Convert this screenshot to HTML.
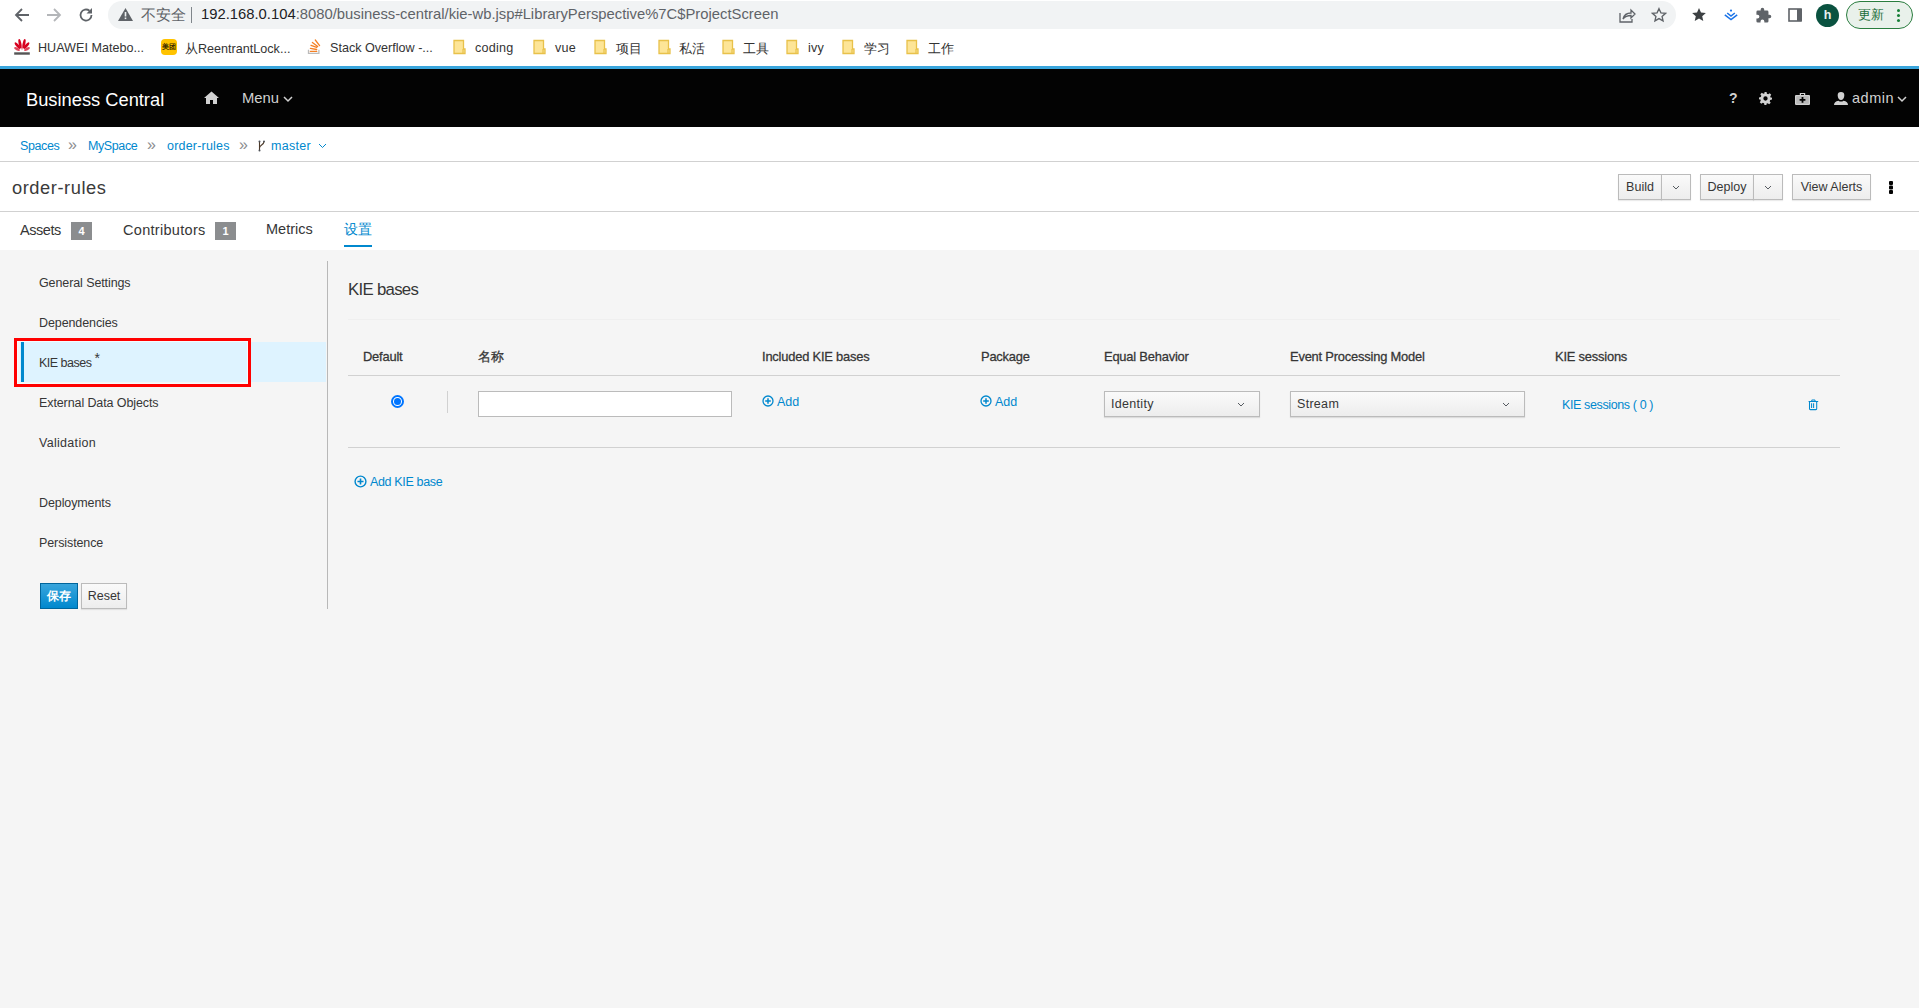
<!DOCTYPE html>
<html><head><meta charset="utf-8">
<style>
*{box-sizing:border-box}
html,body{margin:0;padding:0;width:1919px;height:1008px;overflow:hidden;background:#f5f5f5;font-family:"Liberation Sans",sans-serif;color:#363636}
.a{position:absolute;white-space:nowrap}
#chrome{position:absolute;left:0;top:0;width:1919px;height:66px;background:#fff}
#pill{position:absolute;left:108px;top:1px;width:1568px;height:28px;border-radius:14px;background:#f1f3f4}
#url{left:201px;top:6px;font-size:14.8px;color:#202124}
#url .g{color:#5f6368}
.bm{top:41px;font-size:12.6px;letter-spacing:.25px;color:#333}
.fold{position:absolute;top:40px;width:12px;height:14px;background:#fde293;border:1px solid #f2c94c;border-radius:1px}
#blue{position:absolute;left:0;top:66px;width:1919px;height:3px;background:#39a5dc}
#nav{position:absolute;left:0;top:69px;width:1919px;height:58px;background:#030303}
#bc{position:absolute;left:0;top:127px;width:1919px;height:35px;background:#fff;border-bottom:1px solid #d1d1d1}
#title{position:absolute;left:0;top:162px;width:1919px;height:50px;background:#fff;border-bottom:1px solid #d1d1d1}
#tabs{position:absolute;left:0;top:212px;width:1919px;height:38px;background:#fff}
.lnk{color:#0088ce}
.btn{position:absolute;top:12px;height:26px;background:linear-gradient(#fafafa,#ededed);border:1px solid #bbb;box-shadow:0 1px 1px rgba(3,3,3,.08);font-size:12.5px;color:#363636;text-align:center;line-height:24px}
.badge{position:absolute;top:222px;height:18px;background:#8b8d8f;color:#fff;font-size:11px;font-weight:bold;text-align:center;line-height:18px}
.nav-i{left:39px;font-size:12.5px;letter-spacing:-.1px;color:#363636}
.th{top:349px;font-size:12.9px;font-weight:normal;-webkit-text-stroke:.28px #363636;letter-spacing:-.2px;color:#363636}
.sel{position:absolute;top:391px;height:26px;background:linear-gradient(#fafafa,#ededed);border:1px solid #bbb;box-shadow:0 1px 1px rgba(3,3,3,.1);font-size:12.5px;letter-spacing:.3px;color:#363636;padding-left:6px;line-height:24px}
</style></head><body>
<div id="chrome">
  <!-- nav arrows -->
  <svg class="a" style="left:14px;top:7px" width="16" height="16" viewBox="0 0 16 16"><path d="M15 8H2M8 2L2 8l6 6" fill="none" stroke="#5f6368" stroke-width="1.8"/></svg>
  <svg class="a" style="left:46px;top:7px" width="16" height="16" viewBox="0 0 16 16"><path d="M1 8h13M8 2l6 6-6 6" fill="none" stroke="#b4b6b9" stroke-width="1.8"/></svg>
  <svg class="a" style="left:78px;top:7px" width="16" height="16" viewBox="0 0 16 16"><path d="M13.5 8A5.5 5.5 0 1 1 11.5 3.8" fill="none" stroke="#5f6368" stroke-width="1.8"/><path d="M14 1v5.5H8.5z" fill="#5f6368"/></svg>
  <div id="pill"></div>
  <svg class="a" style="left:118px;top:8px" width="15" height="13" viewBox="0 0 15 13"><path d="M7.5 0L15 13H0z" fill="#5f6368"/><rect x="6.7" y="4" width="1.6" height="4.5" fill="#f1f3f4"/><rect x="6.7" y="9.5" width="1.6" height="1.6" fill="#f1f3f4"/></svg>
  <div class="a" style="left:141px;top:6px;font-size:14.5px;color:#5f6368">不安全</div>
  <div class="a" style="left:191px;top:7px;width:1px;height:16px;background:#80868b"></div>
  <div id="url" class="a">192.168.0.104<span class="g">:8080/business-central/kie-wb.jsp#LibraryPerspective%7C$ProjectScreen</span></div>
  <!-- right toolbar -->
  <svg class="a" style="left:1619px;top:8px" width="17" height="15" viewBox="0 0 17 15"><path d="M1 5v9h12v-3" fill="none" stroke="#5f6368" stroke-width="1.3"/><path d="M4 11c1-4 4-6 8-6V2l4 4-4 4V7.5c-3 0-6 1-8 3.5z" fill="none" stroke="#5f6368" stroke-width="1.3"/></svg>
  <svg class="a" style="left:1651px;top:7px" width="16" height="16" viewBox="0 0 24 24"><path d="M12 2.5l2.9 6.3 6.9.7-5.2 4.6 1.5 6.8L12 17.4l-6.1 3.5 1.5-6.8-5.2-4.6 6.9-.7z" fill="none" stroke="#5f6368" stroke-width="2"/></svg>
  <svg class="a" style="left:1691px;top:7px" width="16" height="16" viewBox="0 0 24 24"><path d="M12 1.5l3 6.8 7.3.7-5.5 4.9 1.6 7.2L12 17.4l-6.4 3.7 1.6-7.2L1.7 9l7.3-.7z" fill="#3c4043"/></svg>
  <svg class="a" style="left:1724px;top:9px" width="15" height="13" viewBox="0 0 15 13"><circle cx="7" cy="1.6" r="1.1" fill="#1a73e8"/><path d="M3.2 4l3.8 3.1L10.8 4M0.8 5.8L7 10.6l6.2-4.8" fill="none" stroke="#1a73e8" stroke-width="1.5"/></svg>
  <svg class="a" style="left:1755px;top:7px" width="17" height="17" viewBox="0 0 24 24"><path d="M20.5 11H19V7a2 2 0 0 0-2-2h-4V3.5a2.5 2.5 0 0 0-5 0V5H4a2 2 0 0 0-2 2v3.8h1.5a2.7 2.7 0 0 1 0 5.4H2V20a2 2 0 0 0 2 2h3.8v-1.5a2.7 2.7 0 0 1 5.4 0V22H17a2 2 0 0 0 2-2v-4h1.5a2.5 2.5 0 0 0 0-5z" fill="#5f6368"/></svg>
  <svg class="a" style="left:1788px;top:8px" width="15" height="14" viewBox="0 0 15 14"><rect x="1" y="1" width="12" height="12" fill="none" stroke="#5f6368" stroke-width="1.6"/><rect x="9" y="1" width="5" height="12" fill="#5f6368"/></svg>
  <div class="a" style="left:1816px;top:4px;width:23px;height:23px;border-radius:50%;background:#0a5240;color:#e8f0ee;font-size:12.5px;font-weight:bold;text-align:center;line-height:22px">h</div>
  <div class="a" style="left:1846px;top:1px;width:67px;height:28px;border-radius:14px;border:1px solid #2a7d3f;background:#e9f1eb"></div>
  <div class="a" style="left:1858px;top:7px;font-size:12.5px;color:#1b6e3a">更新</div>
  <div class="a" style="left:1897px;top:9px;width:3px;height:3px;border-radius:50%;background:#188038;box-shadow:0 5px 0 #188038,0 10px 0 #188038"></div>

  <!-- bookmarks -->
  <svg class="a" style="left:13px;top:38px" width="18" height="18" viewBox="0 0 18 18"><g fill="#d7001e"><ellipse cx="7" cy="5.6" rx="1.35" ry="4.6" transform="rotate(-12 7 5.6)"/><ellipse cx="11" cy="5.6" rx="1.35" ry="4.6" transform="rotate(12 11 5.6)"/><ellipse cx="4.6" cy="7.6" rx="1.4" ry="4.2" transform="rotate(-40 4.6 7.6)"/><ellipse cx="13.4" cy="7.6" rx="1.4" ry="4.2" transform="rotate(40 13.4 7.6)"/></g><g fill="#e0475c"><ellipse cx="4" cy="11" rx="1.4" ry="3.2" transform="rotate(-62 4 11)"/><ellipse cx="14" cy="11" rx="1.4" ry="3.2" transform="rotate(62 14 11)"/><path d="M8 9l1 3.5 1-3.5z"/></g><rect x="1.2" y="14.3" width="15.6" height="2.4" fill="#555"/></svg>
  <div class="a bm" style="left:38px;letter-spacing:0">HUAWEI Matebo...</div>
  <div class="a" style="left:161px;top:39px;width:16px;height:16px;border-radius:4px;background:#ffc300;font-size:6.5px;color:#3a2a00;text-align:center;line-height:16px;font-weight:bold;letter-spacing:-.3px">美团</div>
  <div class="a bm" style="left:185px;letter-spacing:0">从ReentrantLock...</div>
  <svg class="a" style="left:307px;top:38px" width="14" height="17" viewBox="0 0 14 17"><path d="M1.5 11.8v3.6h10.4v-3.6" fill="none" stroke="#bcbbbb" stroke-width="1.3"/><g stroke="#f48024" stroke-width="1.3" stroke-linecap="round"><path d="M3.4 13.4h6.3M3.4 10.3l6.3 1.2M4 7.3l5.7 2.1M5.4 4.4l5.3 4.2M8.3 2l4.3 5.6"/></g></svg>
  <div class="a bm" style="left:330px;letter-spacing:0">Stack Overflow -...</div>
  <svg class="a" style="left:453px;top:39px" width="13" height="16" viewBox="0 0 13 16"><path d="M1 1.5h9.5v8.5h1.5v4.5H1z" fill="#fde597" stroke="#e8c14a" stroke-width="1.3"/><path d="M10 10v4.5" stroke="#e8c14a" stroke-width="1.2"/></svg><div class="a bm" style="left:475px">coding</div>
  <svg class="a" style="left:533px;top:39px" width="13" height="16" viewBox="0 0 13 16"><path d="M1 1.5h9.5v8.5h1.5v4.5H1z" fill="#fde597" stroke="#e8c14a" stroke-width="1.3"/><path d="M10 10v4.5" stroke="#e8c14a" stroke-width="1.2"/></svg><div class="a bm" style="left:555px">vue</div>
  <svg class="a" style="left:594px;top:39px" width="13" height="16" viewBox="0 0 13 16"><path d="M1 1.5h9.5v8.5h1.5v4.5H1z" fill="#fde597" stroke="#e8c14a" stroke-width="1.3"/><path d="M10 10v4.5" stroke="#e8c14a" stroke-width="1.2"/></svg><div class="a bm" style="left:616px">项目</div>
  <svg class="a" style="left:658px;top:39px" width="13" height="16" viewBox="0 0 13 16"><path d="M1 1.5h9.5v8.5h1.5v4.5H1z" fill="#fde597" stroke="#e8c14a" stroke-width="1.3"/><path d="M10 10v4.5" stroke="#e8c14a" stroke-width="1.2"/></svg><div class="a bm" style="left:679px">私活</div>
  <svg class="a" style="left:722px;top:39px" width="13" height="16" viewBox="0 0 13 16"><path d="M1 1.5h9.5v8.5h1.5v4.5H1z" fill="#fde597" stroke="#e8c14a" stroke-width="1.3"/><path d="M10 10v4.5" stroke="#e8c14a" stroke-width="1.2"/></svg><div class="a bm" style="left:743px">工具</div>
  <svg class="a" style="left:786px;top:39px" width="13" height="16" viewBox="0 0 13 16"><path d="M1 1.5h9.5v8.5h1.5v4.5H1z" fill="#fde597" stroke="#e8c14a" stroke-width="1.3"/><path d="M10 10v4.5" stroke="#e8c14a" stroke-width="1.2"/></svg><div class="a bm" style="left:808px">ivy</div>
  <svg class="a" style="left:842px;top:39px" width="13" height="16" viewBox="0 0 13 16"><path d="M1 1.5h9.5v8.5h1.5v4.5H1z" fill="#fde597" stroke="#e8c14a" stroke-width="1.3"/><path d="M10 10v4.5" stroke="#e8c14a" stroke-width="1.2"/></svg><div class="a bm" style="left:864px">学习</div>
  <svg class="a" style="left:906px;top:39px" width="13" height="16" viewBox="0 0 13 16"><path d="M1 1.5h9.5v8.5h1.5v4.5H1z" fill="#fde597" stroke="#e8c14a" stroke-width="1.3"/><path d="M10 10v4.5" stroke="#e8c14a" stroke-width="1.2"/></svg><div class="a bm" style="left:928px">工作</div>
</div>
<div id="blue"></div>
<div id="nav">
  <div class="a" style="left:26px;top:20px;font-size:18.3px;color:#fff">Business Central</div>
  <svg class="a" style="left:204px;top:22px" width="15" height="13" viewBox="0 0 15 13"><path d="M7.5 0.5L0 7h2v6h4V9h3v4h4V7h2z" fill="#d1d1d1"/></svg>
  <div class="a" style="left:242px;top:21px;font-size:14.8px;color:#d1d1d1">Menu</div>
  <svg class="a" style="left:283px;top:27px" width="10" height="7" viewBox="0 0 10 7"><path d="M1 1l4 4 4-4" fill="none" stroke="#d1d1d1" stroke-width="1.5"/></svg>
  <div class="a" style="left:1729px;top:21px;font-size:14px;font-weight:bold;color:#d1d1d1">?</div>
  <svg class="a" style="left:1759px;top:23px" width="13" height="13" viewBox="0 0 24 24"><path fill="#d1d1d1" d="M10 0h4l.6 3.3 2.4 1 2.8-1.9 2.8 2.8-1.9 2.8 1 2.4L24 10v4l-3.3.6-1 2.4 1.9 2.8-2.8 2.8-2.8-1.9-2.4 1L14 24h-4l-.6-3.3-2.4-1-2.8 1.9-2.8-2.8 1.9-2.8-1-2.4L0 14v-4l3.3-.6 1-2.4-1.9-2.8 2.8-2.8 2.8 1.9 2.4-1zM12 8a4 4 0 1 0 0 8 4 4 0 0 0 0-8z"/></svg>
  <svg class="a" style="left:1795px;top:92px;top:23px" width="15" height="13" viewBox="0 0 15 13"><path d="M4.8 3V1h5.4v2h3.8a1 1 0 0 1 1 1v8a1 1 0 0 1-1 1H1a1 1 0 0 1-1-1V4a1 1 0 0 1 1-1zM6 3h3V2H6z" fill="#d1d1d1"/><rect x="1.2" y="4.2" width="12.6" height="7.6" fill="#b9b9b9"/><path d="M6.6 5h1.8v2h2v1.8h-2v2H6.6v-2h-2V7h2z" fill="#030303"/></svg>
  <svg class="a" style="left:1834px;top:23px" width="14" height="13" viewBox="0 0 14 13"><path d="M7 0a3.3 3.3 0 0 1 3.3 3.5C10.3 6 8.8 8 7 8S3.7 6 3.7 3.5A3.3 3.3 0 0 1 7 0zM0 13c0-2.5 1.5-3.7 4.5-4.3C5.3 9.3 6 9.6 7 9.6s1.7-.3 2.5-.9c3 .6 4.5 1.8 4.5 4.3z" fill="#d1d1d1"/></svg>
  <div class="a" style="left:1852px;top:21px;font-size:14.5px;letter-spacing:.5px;color:#d1d1d1">admin</div>
  <svg class="a" style="left:1897px;top:27px" width="10" height="7" viewBox="0 0 10 7"><path d="M1 1l4 4 4-4" fill="none" stroke="#d1d1d1" stroke-width="1.5"/></svg>
</div>
<div id="bc">
  <div class="a lnk" style="left:20px;top:12px;font-size:12.5px;letter-spacing:-.4px">Spaces</div>
  <div class="a" style="left:68px;top:9px;font-size:16px;color:#8b8d8f">»</div>
  <div class="a lnk" style="left:88px;top:12px;font-size:12.5px;letter-spacing:-.4px">MySpace</div>
  <div class="a" style="left:147px;top:9px;font-size:16px;color:#8b8d8f">»</div>
  <div class="a lnk" style="left:167px;top:12px;font-size:12.5px;letter-spacing:.2px">order-rules</div>
  <div class="a" style="left:239px;top:9px;font-size:16px;color:#8b8d8f">»</div>
  <svg class="a" style="left:257px;top:140px;top:13px" width="9" height="12" viewBox="0 0 9 12"><path d="M2.5 1.5v9M2.5 8C2.5 5 7 5 7 1.5" fill="none" stroke="#4d3a2a" stroke-width="1.1"/><circle cx="2.5" cy="1.5" r="1" fill="#4d5258"/><circle cx="2.5" cy="10.5" r="1" fill="#4d5258"/><circle cx="7" cy="1.5" r="1" fill="#4d5258"/></svg>
  <div class="a lnk" style="left:271px;top:12px;font-size:12.5px;letter-spacing:.3px">master</div>
  <svg class="a" style="left:318px;top:16px" width="9" height="6" viewBox="0 0 9 6"><path d="M1 1l3.5 3.5L8 1" fill="none" stroke="#0088ce" stroke-width="1"/></svg>
</div>
<div id="title">
  <div class="a" style="left:12px;top:15px;font-size:18.3px;letter-spacing:.55px;color:#3a3a3a">order-rules</div>
  <div class="btn" style="left:1618px;width:44px">Build</div>
  <div class="btn" style="left:1661px;width:30px"><svg width="8" height="5" viewBox="0 0 8 5" style="vertical-align:middle"><path d="M1 1l3 3 3-3" fill="none" stroke="#4d5258" stroke-width="0.95"/></svg></div>
  <div class="btn" style="left:1700px;width:54px">Deploy</div>
  <div class="btn" style="left:1753px;width:30px"><svg width="8" height="5" viewBox="0 0 8 5" style="vertical-align:middle"><path d="M1 1l3 3 3-3" fill="none" stroke="#4d5258" stroke-width="0.95"/></svg></div>
  <div class="btn" style="left:1792px;width:79px">View Alerts</div>
  <div class="a" style="left:1889px;top:19px;width:3.5px;height:3.5px;border-radius:1px;background:#030303;box-shadow:0 4.5px 0 #030303,0 9px 0 #030303"></div>
</div>
<div id="tabs">
  <div class="a" style="left:20px;top:10px;font-size:14.5px;letter-spacing:-.45px;color:#363636">Assets</div>
  <div class="badge" style="left:71px;top:10px;width:21px">4</div>
  <div class="a" style="left:123px;top:10px;font-size:14.5px;letter-spacing:.3px;color:#363636">Contributors</div>
  <div class="badge" style="left:215px;top:10px;width:21px">1</div>
  <div class="a" style="left:266px;top:9px;font-size:14.5px;color:#363636">Metrics</div>
  <div class="a lnk" style="left:344px;top:9px;font-size:14px">设置</div>
  <div class="a" style="left:344px;top:33px;width:28px;height:2px;background:#0088ce"></div>
</div>
<!-- left nav -->
<div class="a nav-i" style="top:276px">General Settings</div>
<div class="a nav-i" style="top:316px">Dependencies</div>
<div class="a" style="left:20px;top:342px;width:306px;height:40px;background:#def3ff"></div>
<div class="a" style="left:21px;top:342px;width:3px;height:40px;background:#0088ce"></div>
<div class="a nav-i" style="top:356px;letter-spacing:-.5px">KIE bases</div>
<div class="a" style="left:94.5px;top:350px;font-size:14px;color:#363636">*</div>
<div class="a" style="left:14px;top:338px;width:237px;height:49px;border:3px solid #ff0000;box-shadow:inset 0 0 0 1px #f4fbff"></div>
<div class="a nav-i" style="top:396px">External Data Objects</div>
<div class="a nav-i" style="top:436px;letter-spacing:.3px">Validation</div>
<div class="a nav-i" style="top:496px">Deployments</div>
<div class="a nav-i" style="top:536px">Persistence</div>
<div class="a" style="left:40px;top:583px;width:38px;height:26px;background:linear-gradient(#39a5dc,#0088ce);border:1px solid #00659c;color:#fff;font-size:12px;font-weight:bold;text-align:center;line-height:24px">保存</div>
<div class="a" style="left:81px;top:583px;width:46px;height:26px;background:linear-gradient(#fafafa,#ededed);border:1px solid #bbb;color:#363636;font-size:12.5px;text-align:center;line-height:24px;box-shadow:0 1px 1px rgba(3,3,3,.08)">Reset</div>
<div class="a" style="left:327px;top:261px;width:1px;height:348px;background:#b8b8b8"></div>
<!-- content -->
<div class="a" style="left:348px;top:280px;font-size:16.8px;letter-spacing:-.7px;color:#363636">KIE bases</div>
<div class="a" style="left:348px;top:319px;width:1492px;height:1px;background:#efefef"></div>
<div class="a th" style="left:363px">Default</div>
<div class="a th" style="left:478px">名称</div>
<div class="a th" style="left:762px">Included KIE bases</div>
<div class="a th" style="left:981px">Package</div>
<div class="a th" style="left:1104px">Equal Behavior</div>
<div class="a th" style="left:1290px">Event Processing Model</div>
<div class="a th" style="left:1555px">KIE sessions</div>
<div class="a" style="left:348px;top:375px;width:1492px;height:1px;background:#d1d1d1"></div>
<div class="a" style="left:391px;top:395px;width:13px;height:13px;border-radius:50%;background:#fff;border:2px solid #0075ff"></div>
<div class="a" style="left:394px;top:398px;width:7px;height:7px;border-radius:50%;background:#0075ff"></div>
<div class="a" style="left:447px;top:391px;width:1px;height:22px;background:#d1d1d1"></div>
<div class="a" style="left:478px;top:391px;width:254px;height:26px;background:#fff;border:1px solid #bbb"></div>
<svg class="a" style="left:762px;top:395px" width="12" height="12" viewBox="0 0 12 12"><circle cx="6" cy="6" r="5" fill="none" stroke="#0088ce" stroke-width="1.3"/><path d="M6 3.2v5.6M3.2 6h5.6" stroke="#0088ce" stroke-width="1.5"/></svg>
<div class="a lnk" style="left:777px;top:395px;font-size:12.5px">Add</div>
<svg class="a" style="left:980px;top:395px" width="12" height="12" viewBox="0 0 12 12"><circle cx="6" cy="6" r="5" fill="none" stroke="#0088ce" stroke-width="1.3"/><path d="M6 3.2v5.6M3.2 6h5.6" stroke="#0088ce" stroke-width="1.5"/></svg>
<div class="a lnk" style="left:995px;top:395px;font-size:12.5px">Add</div>
<div class="sel" style="left:1104px;width:156px">Identity<svg style="position:absolute;right:14px;top:10px" width="8" height="5" viewBox="0 0 8 5"><path d="M1 1l3 3 3-3" fill="none" stroke="#4d5258" stroke-width="0.95"/></svg></div>
<div class="sel" style="left:1290px;width:235px">Stream<svg style="position:absolute;right:14px;top:10px" width="8" height="5" viewBox="0 0 8 5"><path d="M1 1l3 3 3-3" fill="none" stroke="#4d5258" stroke-width="0.95"/></svg></div>
<div class="a lnk" style="left:1562px;top:398px;font-size:12.5px;letter-spacing:-.38px">KIE sessions ( 0 )</div>
<svg class="a" style="left:1808px;top:398px" width="11" height="13" viewBox="0 0 11 13"><path d="M0.6 3.5h9.6M3.4 3.3l.8-1.4h2.4l.8 1.4M1.5 3.8v7q0 .8.8.8h5.6q.8 0 .8-.8v-7M3.6 5.2v4.8M5.6 5.2v4.8" fill="none" stroke="#0088ce" stroke-width="1.05"/></svg>
<div class="a" style="left:348px;top:447px;width:1492px;height:1px;background:#d1d1d1"></div>
<svg class="a" style="left:354px;top:475px" width="13" height="13" viewBox="0 0 12 12"><circle cx="6" cy="6" r="5" fill="none" stroke="#0088ce" stroke-width="1.3"/><path d="M6 3.2v5.6M3.2 6h5.6" stroke="#0088ce" stroke-width="1.5"/></svg>
<div class="a lnk" style="left:370px;top:475px;font-size:12.5px;letter-spacing:-.35px">Add KIE base</div>
</body></html>
